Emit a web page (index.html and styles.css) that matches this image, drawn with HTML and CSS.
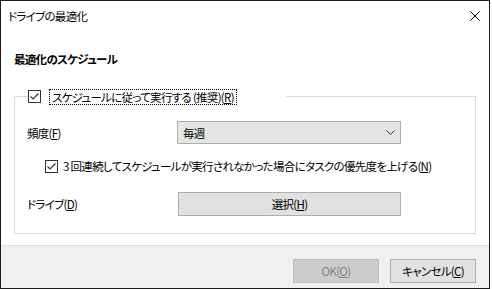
FILE: index.html
```html
<!DOCTYPE html>
<html>
<head>
<meta charset="utf-8">
<title>ドライブの最適化</title>
<link rel="stylesheet" href="styles.css">
</head>
<body>
<div class="window">
	<div class="titlebar">
		<span class="title">ドライブの最適化</span>
		<span class="close">
			<svg width="10" height="10" viewBox="0 0 10 10"><path d="M0.5 0.5L9.5 9.5M9.5 0.5L0.5 9.5" stroke="#000" stroke-width="1" fill="none"/></svg>
		</span>
	</div>
	<div class="content">
		<div class="heading">最適化のスケジュール</div>
		<fieldset class="group">
			<legend class="group-legend">
				<span class="check"><svg width="11" height="11" viewBox="0 0 11 11"><path d="M1.5 5.5L4 8L9.5 2.5" stroke="#333" stroke-width="1.2" fill="none"/></svg></span>
				<span class="focus">スケジュールに従って実行する (推奨)(<u>R</u>)</span>
			</legend>
			<div class="row">
				<span class="row-label">頻度(<u>F</u>)</span>
				<div class="combo">
					<span>毎週</span>
					<svg width="9" height="5" viewBox="0 0 9 5"><path d="M0.5 0.5L4.5 4.5L8.5 0.5" stroke="#333" stroke-width="1" fill="none"/></svg>
				</div>
			</div>
			<div class="row row-sub">
				<span class="check"><svg width="11" height="11" viewBox="0 0 11 11"><path d="M1.5 5.5L4 8L9.5 2.5" stroke="#333" stroke-width="1.2" fill="none"/></svg></span>
				<span class="sub-label">3 回連続してスケジュールが実行されなかった場合にタスクの優先度を上げる(<u>N</u>)</span>
			</div>
			<div class="row row-drive">
				<span class="row-label">ドライブ(<u>D</u>)</span>
				<button type="button" class="btn btn-wide">選択(<u>H</u>)</button>
			</div>
		</fieldset>
	</div>
	<div class="footer">
		<button type="button" class="btn btn-disabled">OK(<u>O</u>)</button>
		<button type="button" class="btn">キャンセル(<u>C</u>)</button>
	</div>
</div>
</body>
</html>
```

FILE: styles.css
```css
body {
	margin: 0;
	background-color: #ffffff;
	font-family: "Noto Sans CJK JP", "Noto Sans", sans-serif;
	font-size: 11.5px;
	letter-spacing: -0.7px;
	font-feature-settings: "palt";
	color: #000000;
}
.window {
	width: 490px;
	height: 289px;
	box-sizing: border-box;
	border: 1px solid #1a1a1a;
	display: flex;
	flex-direction: column;
	background-color: #ffffff;
}
.titlebar {
	height: 29px;
	display: flex;
	align-items: center;
	justify-content: space-between;
	padding-left: 7px;
	padding-right: 9px;
	flex-shrink: 0;
}
.close {
	display: flex;
	width: 10px;
	height: 10px;
}
.content {
	flex: 1;
	padding-top: 21px;
	padding-left: 13px;
	padding-right: 13px;
}
.heading {
	font-weight: bold;
	line-height: 16px;
	margin-bottom: 23px;
}
.group {
	margin: 0;
	padding: 18px 12px 17px 12px;
	border: 1px solid #dcdcdc;
	min-width: 0;
}
.group-legend {
	display: flex;
	align-items: center;
	height: 13px;
	width: 258px;
	padding: 0;
	margin-left: 1px;
}
.check {
	width: 11px;
	height: 11px;
	border: 1px solid #333333;
	display: inline-flex;
	flex-shrink: 0;
	background-color: #ffffff;
}
.focus {
	margin-left: 9px;
	line-height: 14px;
	padding: 0 2px;
	outline: 1px dotted #000000;
	white-space: nowrap;
}
.row {
	display: flex;
	align-items: center;
}
.row-label {
	width: 150px;
	line-height: 16px;
}
.combo {
	width: 224px;
	height: 23px;
	box-sizing: border-box;
	border: 1px solid #acacac;
	background-color: #e5e5e5;
	display: flex;
	align-items: center;
	justify-content: space-between;
	padding-left: 5px;
	padding-right: 5px;
}
.row-sub {
	margin-top: 14px;
	padding-left: 18px;
	height: 16px;
}
.sub-label {
	margin-left: 5px;
	white-space: nowrap;
	line-height: 16px;
}
.row-drive {
	margin-top: 18px;
}
.row-drive .btn-wide {
	margin-left: 1px;
}
.btn {
	font-family: "Noto Sans CJK JP", "Noto Sans", sans-serif;
	font-size: 11.5px;
	letter-spacing: -0.7px;
	font-feature-settings: "palt";
	color: #000000;
	background-color: #e1e1e1;
	border: 1px solid #adadad;
	height: 24px;
	width: 86px;
	padding: 0;
	margin: 0;
}
.btn-wide {
	width: 223px;
}
.btn-disabled {
	background-color: #cccccc;
	border-color: #bfbfbf;
	color: #838383;
}
.footer {
	height: 43px;
	box-sizing: border-box;
	flex-shrink: 0;
	border-top: 1px solid #dfdfdf;
	background-color: #f0f0f0;
	display: flex;
	justify-content: flex-end;
	align-items: flex-start;
	gap: 11px;
	padding-top: 13px;
	padding-right: 13px;
}
```
